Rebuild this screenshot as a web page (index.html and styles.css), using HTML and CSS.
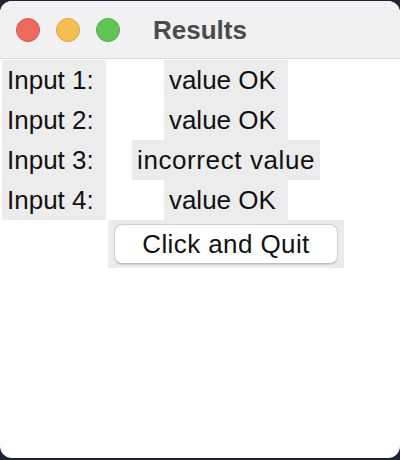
FILE: index.html
```html
<!DOCTYPE html>
<html>
<head>
<meta charset="utf-8">
<link rel="stylesheet" href="styles.css">
</head>
<body>
<div class="window">
  <div class="titlebar">
    <div class="lights">
      <span class="light red"></span>
      <span class="light yellow"></span>
      <span class="light green"></span>
    </div>
    <div class="title">Results</div>
  </div>
  <div class="content">
    <div class="grid">
      <div class="cell"><span class="lbl">Input 1: </span></div>
      <div class="cell"><span class="lbl">value OK </span></div>
      <div class="cell"><span class="lbl">Input 2: </span></div>
      <div class="cell"><span class="lbl">value OK </span></div>
      <div class="cell"><span class="lbl">Input 3: </span></div>
      <div class="cell"><span class="lbl wide">incorrect value</span></div>
      <div class="cell"><span class="lbl">Input 4: </span></div>
      <div class="cell"><span class="lbl">value OK </span></div>
      <div class="cell"></div>
      <div class="cell btncell"><button class="btn">Click and Quit</button></div>
    </div>
  </div>
</div>
</body>
</html>
```

FILE: styles.css
```css
html, body {
  margin: 0;
  padding: 0;
}
body {
  background: #1e2331;
  padding-top: 1px;
  height: 459px;
  overflow: hidden;
  font-family: "Liberation Sans", Arial, sans-serif;
}
.window {
  width: 400px;
  height: 457px;
  background: #ffffff;
  border-radius: 12px;
  overflow: hidden;
}
.titlebar {
  position: relative;
  height: 57px;
  background: #f1f1f1;
  border-bottom: 1px solid #d9d9d9;
  display: flex;
  align-items: center;
  justify-content: center;
}
.lights {
  position: absolute;
  left: 16px;
  top: 17px;
  display: flex;
  gap: 16px;
}
.light {
  width: 24px;
  height: 24px;
  border-radius: 50%;
  box-sizing: border-box;
  display: block;
}
.red { background: #ee6a5f; border: 1px solid #d9574d; }
.yellow { background: #f5bf4f; border: 1px solid #dba73f; }
.green { background: #61c554; border: 1px solid #51ad44; }
.title {
  font-weight: bold;
  font-size: 26px;
  color: #4b4b4b;
  margin-top: 1px;
}
.content {
  padding-top: 1px;
}
.grid {
  display: grid;
  grid-template-columns: 108px 236px;
  grid-template-rows: 40px 40px 40px 40px 48px;
}
.cell {
  display: flex;
  justify-content: center;
  align-items: stretch;
}
.lbl {
  background: #ececec;
  font-size: 26px;
  color: #111;
  padding: 0 5px 0 5px;
  line-height: 40px;
  white-space: pre;
}
.lbl.wide {
  box-sizing: border-box;
  width: 188px;
  letter-spacing: 0.6px;
}
.btncell {
  background: #ececec;
  align-items: center;
}
.btn {
  width: 224px;
  height: 40px;
  background: #ffffff;
  border: 1px solid #cfcfcf;
  border-bottom-color: #bdbdbd;
  border-radius: 8px;
  box-shadow: 0 1px 1px rgba(0,0,0,0.12);
  font-family: "Liberation Sans", Arial, sans-serif;
  font-size: 26px;
  letter-spacing: 0.4px;
  color: #111;
  padding: 0;
  margin: 0;
}
```
